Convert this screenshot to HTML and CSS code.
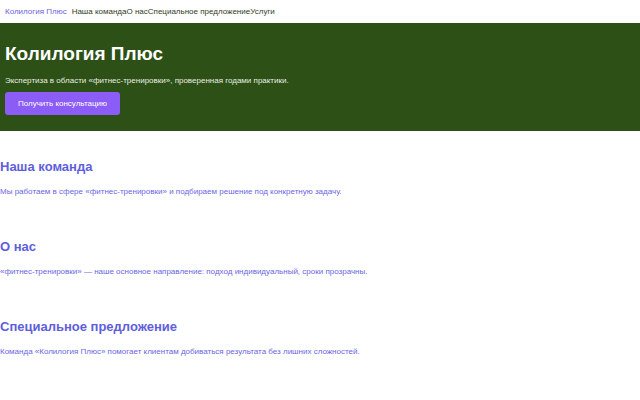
FILE: index.html
```html
<!DOCTYPE html>
<html lang="ru">
<head>
<meta charset="utf-8">
<title>Колилогия Плюс</title>
<link rel="stylesheet" href="styles.css">
</head>
<body>
<nav class="nav">
  <a class="brand" href="#">Колилогия Плюс</a>
  <div class="links">
    <a href="#team">Наша команда</a><a href="#about">О нас</a><a href="#offer">Специальное предложение</a><a href="#services">Услуги</a>
  </div>
</nav>
<header class="hero">
  <h1 class="hero-title">Колилогия Плюс</h1>
  <p class="hero-text">Экспертиза в области «фитнес-тренировки», проверенная годами практики.</p>
  <a class="btn" href="#">Получить консультацию</a>
</header>
<main>
  <section class="section" id="team">
    <h2 class="section-title">Наша команда</h2>
    <p class="section-text">Мы работаем в сфере «фитнес-тренировки» и подбираем решение под конкретную задачу.</p>
  </section>
  <section class="section" id="about">
    <h2 class="section-title">О нас</h2>
    <p class="section-text">«фитнес-тренировки» — наше основное направление: подход индивидуальный, сроки прозрачны.</p>
  </section>
  <section class="section" id="offer">
    <h2 class="section-title">Специальное предложение</h2>
    <p class="section-text">Команда «Колилогия Плюс» помогает клиентам добиваться результата без лишних сложностей.</p>
  </section>
</main>
</body>
</html>
```
FILE: styles.css
```css
* { box-sizing: border-box; }
body {
  margin: 0;
  font-family: "Liberation Sans", Arial, sans-serif;
  background: #fff;
}
a { text-decoration: none; }
.nav {
  display: flex;
  align-items: center;
  gap: 5px;
  height: 23px;
  padding: 0 5px;
  font-size: 8px;
}
.brand { color: #6a5fd8; }
.links { display: flex; }
.links a { color: #2f3b25; }
.hero {
  display: flex;
  flex-direction: column;
  align-items: flex-start;
  background: #2d5016;
  padding: 20px 5px 16px;
  color: #fff;
}
.hero-title {
  margin: 0;
  font-size: 19px;
  line-height: 22px;
  font-weight: bold;
}
.hero-text {
  margin: 11px 0 6px;
  font-size: 8px;
  line-height: 10px;
  color: #e8eee2;
}
.btn {
  display: block;
  background: #8b5cf6;
  color: #fff;
  font-size: 8px;
  line-height: 10px;
  padding: 6.5px 13px;
  border-radius: 3px;
}
main { padding-top: 28px; }
.section { margin-bottom: 42px; }
.section-title {
  margin: 0;
  font-size: 13px;
  line-height: 15px;
  font-weight: bold;
  color: #5e5edc;
}
.section-text {
  margin: 13px 0 0;
  font-size: 8px;
  line-height: 10px;
  color: #6a66e0;
}
```
